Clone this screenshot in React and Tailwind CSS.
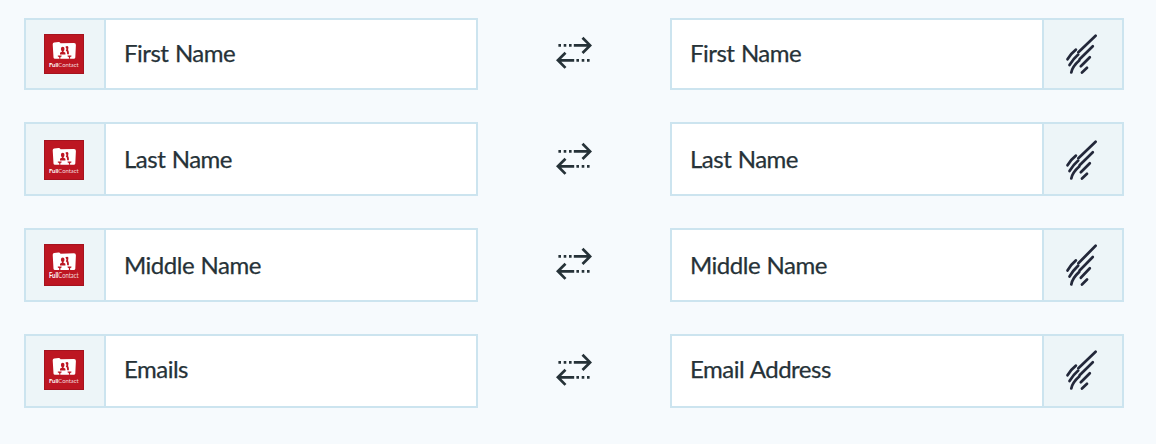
const rows = [
  { from: "First Name", to: "First Name", box: "h-[72px]", icon: "h-10", gap: "mb-8", iconPad: "py-0", labelPad: "pb-0.5", arrowPad: "pb-0.5" },
  { from: "Last Name", to: "Last Name", box: "h-[74px]", icon: "h-10", gap: "mb-8", iconPad: "pt-0.5", labelPad: "pb-0", arrowPad: "pb-0" },
  { from: "Middle Name", to: "Middle Name", box: "h-[74px]", icon: "h-[42px]", gap: "mb-8", iconPad: "py-0", labelPad: "pb-0", arrowPad: "pb-0.5" },
  { from: "Emails", to: "Email Address", box: "h-[74px]", icon: "h-10", gap: "mb-0", iconPad: "pb-0.5", labelPad: "pb-1", arrowPad: "pb-[3px]" },
];

function FullContactLogo({ className }) {
  return (
    <svg viewBox="0 0 40 40" preserveAspectRatio="none" className={`w-10 shrink-0 ${className}`}>
      <rect width="40" height="40" fill="#bd1622" />
      <rect x="0.5" y="0.5" width="39" height="39" fill="none" stroke="#a5131e" />
      {/* Folder */}
      <path
        d="M8.7 10.2Q8.7 8.6 10.2 8.5L14.5 8.1Q15.8 8 16.6 9.2L30 8.9Q32 9 31.9 11L31.3 23.5Q31.1 24.7 29.8 24.7L11 24.7Q9.6 24.7 9.5 23.5Z"
        fill="#fff"
      />
      {/* People */}
      <g fill="#bd1622">
        <ellipse cx="18.7" cy="15" rx="1.8" ry="2.2" />
        <path d="M18 16h1.4v1.6l2 1.2v1.7H16v-1.7l2-1.2z" />
        <path d="M21.4 12.7q2-1.4 3 .2l-.3 3 .7 1.9.1 2.5h-1.7l-.4-2.9-1-.9.7-1.4z" />
        <path d="M13.8 21.4h3.8v1.1l-1.2.5v1.7h-1.2v-1.7l-1.4-.5zM23.6 21.4h3.8v1.1l-1.3.5v1.7h-1.2v-1.7l-1.3-.5z" />
      </g>
      <text x="5" y="32.6" fontSize="6.4" fill="#fff" textLength="29.6" lengthAdjust="spacingAndGlyphs" className="font-['Lato',sans-serif] tracking-normal [word-spacing:0] [-webkit-text-stroke:0]">
        <tspan fontWeight="700">Full</tspan>
        <tspan fillOpacity="0.85" fontWeight="400">Contact</tspan>
      </text>
    </svg>
  );
}

function SyncArrows() {
  return (
    <svg width="36" height="34" viewBox="0 0 36 34" fill="none" stroke="#263238" strokeWidth="2.7">
      <path d="M17.8 9.4H34.5M26.5 1.8l7.6 7.6-7.6 7.6" />
      <path d="M2.4 9.4h13.3" strokeDasharray="2.6 2.7" />
      <path d="M18.2 24.3H1.5M9.5 16.7l-7.6 7.6 7.6 7.6" />
      <path d="M20.4 24.3h13.3" strokeDasharray="2.6 2.7" />
    </svg>
  );
}

function StrokesIcon({ className }) {
  return (
    <svg
      viewBox="0 0 34 40"
      preserveAspectRatio="none"
      fill="none"
      stroke="#23283a"
      strokeWidth="2.7"
      strokeLinecap="round"
      className={`w-[34px] shrink-0 ${className}`}
    >
      <path d="M30.6 1.7L13.4 18.3" />
      <path d="M27.8 12.3L14.6 25.2" />
      <path d="M24.8 23.2L15.8 32.2" />
      <path d="M22 33.8L17 38.5" />
      <path d="M10.9 15.6Q6.4 19 2.5 25.3" />
      <path d="M13.2 20.6Q8.4 24.8 4.5 31" />
      <path d="M14.2 26.6Q7.4 32.6 6.3 38.5" />
    </svg>
  );
}

function IconCell({ className, children }) {
  return (
    <div className={`flex w-20 shrink-0 items-center border-[#cce4ef] bg-[#edf5f8] ${className}`}>
      {children}
    </div>
  );
}

function FieldBox({ children }) {
  return <div className="flex w-[454px] border-2 border-[#cce4ef] bg-white">{children}</div>;
}

function FieldLabel({ className, children }) {
  return <div className={`flex flex-1 items-center px-[18px] ${className}`}>{children}</div>;
}

export default function App() {
  return (
    <div className="h-[444px] w-[1156px] overflow-hidden bg-[#f6fafd] pt-[18px] pr-8 pl-6 font-['Lato',sans-serif] text-2xl tracking-[-0.5px] text-[#263238] [word-spacing:0.8px] [-webkit-text-stroke:0.25px_#263238]">
      {rows.map(row => (
        <div key={row.from} className={`flex ${row.box} ${row.gap}`}>
          <FieldBox>
            <IconCell className={`border-r-2 pl-[18px] ${row.iconPad}`}>
              <FullContactLogo className={row.icon} />
            </IconCell>
            <FieldLabel className={row.labelPad}>{row.from}</FieldLabel>
          </FieldBox>
          <div className={`flex flex-1 items-center justify-center ${row.arrowPad}`}>
            <SyncArrows />
          </div>
          <FieldBox>
            <FieldLabel className={row.labelPad}>{row.to}</FieldLabel>
            <IconCell className={`border-l-2 pl-[21px] ${row.iconPad}`}>
              <StrokesIcon className={row.icon} />
            </IconCell>
          </FieldBox>
        </div>
      ))}
    </div>
  );
}
